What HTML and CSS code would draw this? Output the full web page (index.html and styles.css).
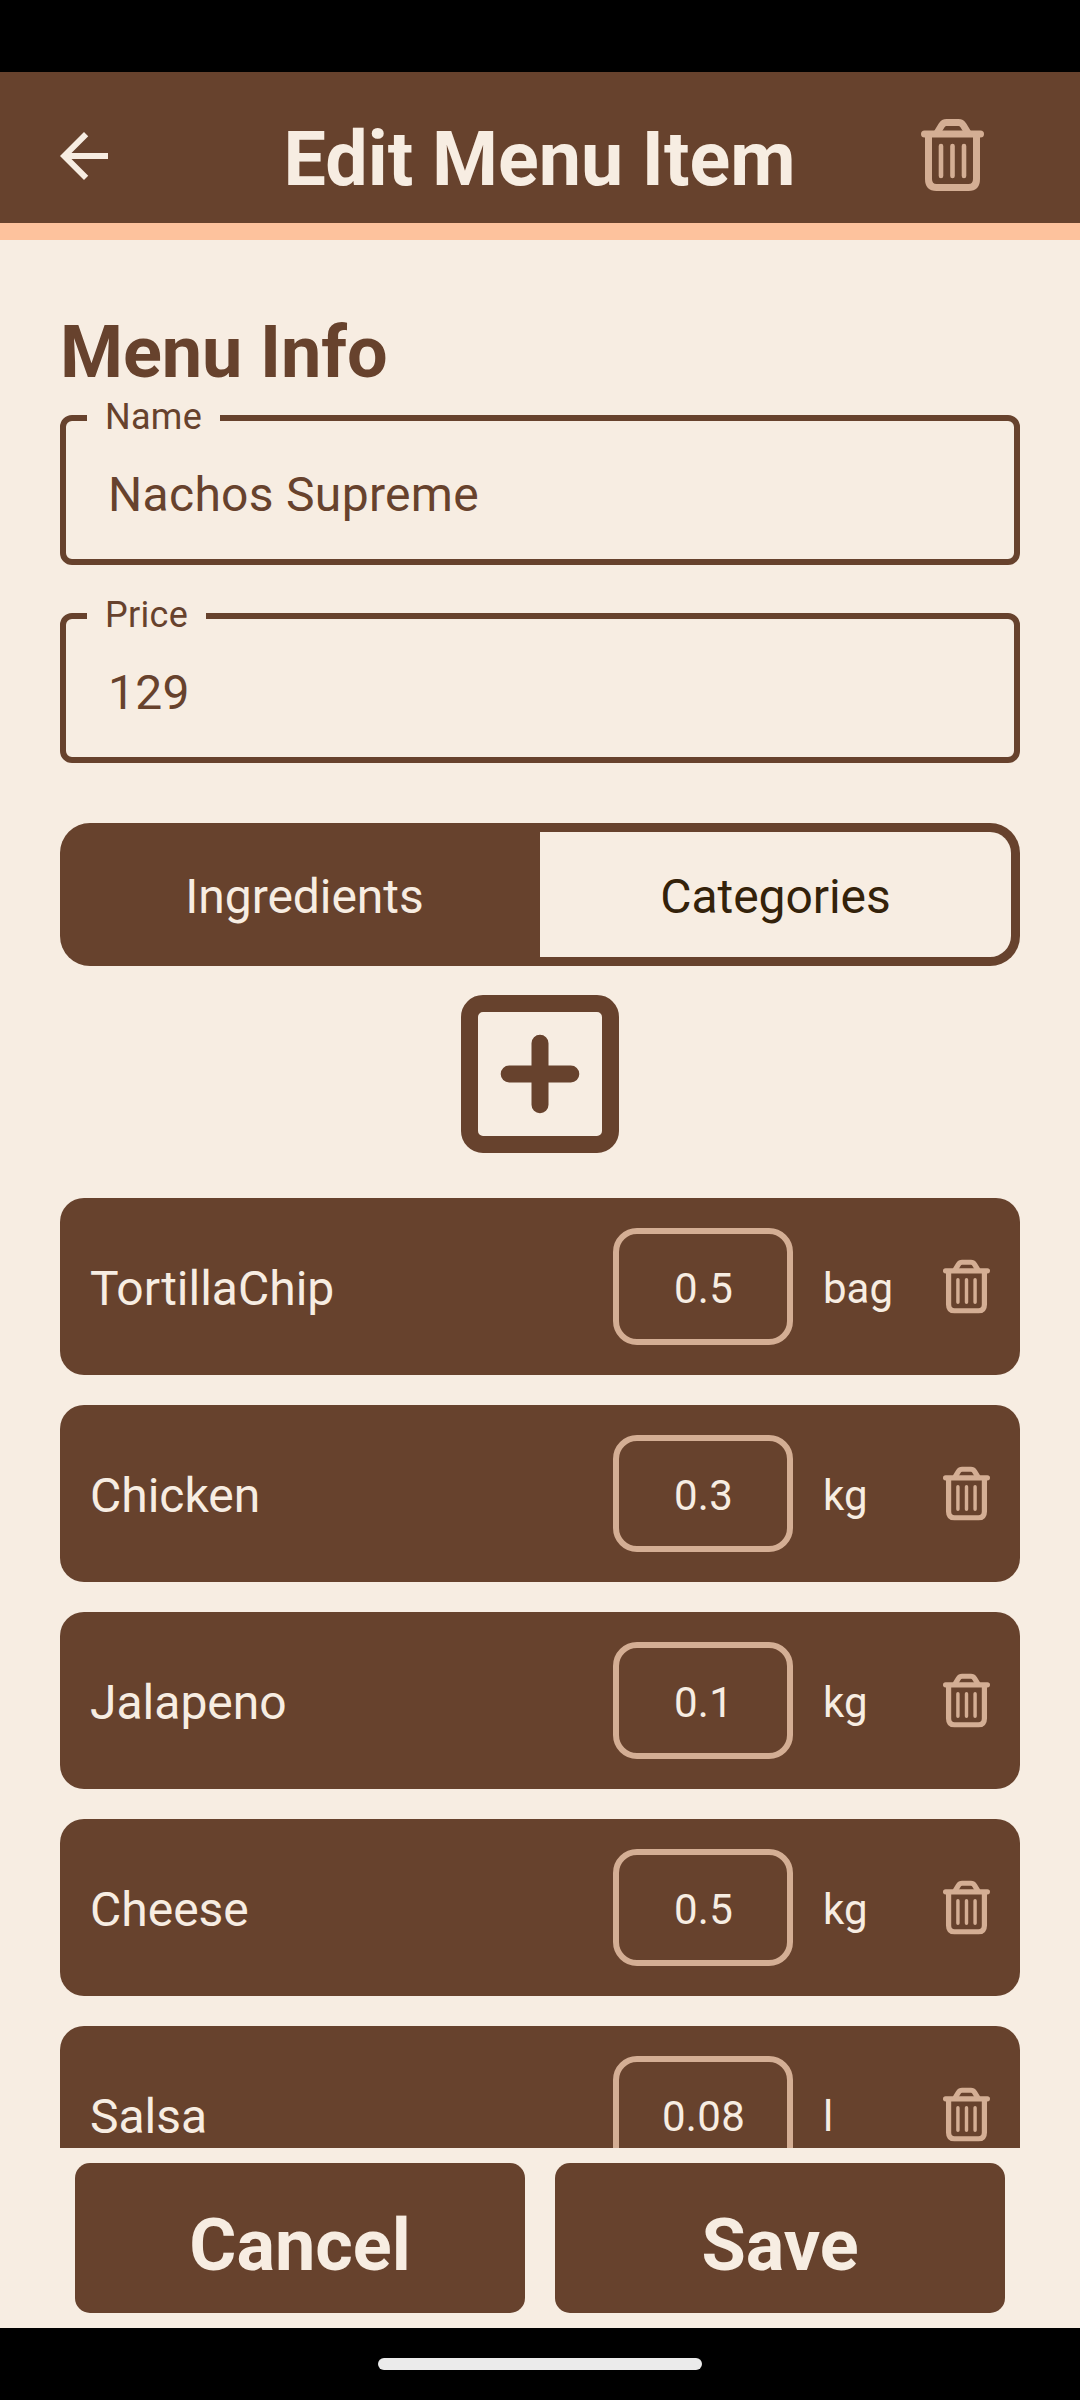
FILE: index.html
```html
<!DOCTYPE html>
<html lang="en">
<head>
<meta charset="utf-8">
<title>Edit Menu Item</title>
<link rel="stylesheet" href="styles.css">
</head>
<body>
<svg class="sprite" aria-hidden="true">
  <symbol id="trash" viewBox="0.5 0 63 72">
    <g fill="none" stroke="currentColor" stroke-linecap="round">
      <path d="M4 15H60" stroke-width="7"/>
      <path d="M16.5 14L21.2 6.3Q23 3.5 26 3.5H38Q41 3.5 42.8 6.3L47.5 14" stroke-width="7" stroke-linecap="butt"/>
      <path d="M8 16V60Q8 68.5 16 68.5H48Q56 68.5 56 60V16" stroke-width="7" stroke-linecap="butt"/>
      <path d="M20.5 27V57M32 27V57M43.5 27V57" stroke-width="4.6"/>
    </g>
  </symbol>
</svg>
<div class="screen">
  <div class="status"></div>
  <header class="bar">
    <svg class="back" viewBox="0 0 24 24"><path fill="currentColor" d="M20 11H7.83l5.59-5.59L12 4l-8 8 8 8 1.41-1.41L7.83 13H20z"/></svg>
    <h1 class="title">Edit Menu Item</h1>
    <svg class="bar-trash"><use href="#trash"/></svg>
  </header>
  <main class="content">
    <h2 class="section">Menu Info</h2>
    <fieldset class="field"><legend class="label">Name</legend><div class="value">Nachos Supreme</div></fieldset>
    <fieldset class="field"><legend class="label">Price</legend><div class="value">129</div></fieldset>
    <div class="tabs"><div class="tab active">Ingredients</div><div class="tab">Categories</div></div>
    <svg class="add" viewBox="0 0 158 158">
      <rect x="8.5" y="8.5" width="141" height="141" rx="13.5" fill="none" stroke="currentColor" stroke-width="17"/>
      <path d="M48.2 79H109.8M79 48.2V109.8" stroke="currentColor" stroke-width="17" stroke-linecap="round"/>
    </svg>
    <div class="list">
      <div class="row"><span class="name">TortillaChip</span><span class="qty">0.5</span><span class="unit">bag</span><svg class="row-trash"><use href="#trash"/></svg></div>
      <div class="row"><span class="name">Chicken</span><span class="qty">0.3</span><span class="unit">kg</span><svg class="row-trash"><use href="#trash"/></svg></div>
      <div class="row"><span class="name">Jalapeno</span><span class="qty">0.1</span><span class="unit">kg</span><svg class="row-trash"><use href="#trash"/></svg></div>
      <div class="row"><span class="name">Cheese</span><span class="qty">0.5</span><span class="unit">kg</span><svg class="row-trash"><use href="#trash"/></svg></div>
      <div class="row"><span class="name">Salsa</span><span class="qty">0.08</span><span class="unit">l</span><svg class="row-trash"><use href="#trash"/></svg></div>
    </div>
  </main>
  <footer class="actions"><div class="button">Cancel</div><div class="button">Save</div></footer>
  <div class="nav"><div class="pill"></div></div>
</div>
</body>
</html>
```
FILE: styles.css
```css
* { box-sizing: border-box; }
body {
  margin: 0;
  font-family: Roboto, sans-serif;
  background: #f7ede2;
}
.sprite { display: none; }
.screen {
  display: flex;
  flex-direction: column;
  width: 1080px;
  height: 2400px;
  overflow: hidden;
  background: #f7ede2;
  color: #67422d;
}
.status { flex: none; height: 72px; background: #000; }
.bar {
  flex: none;
  display: flex;
  align-items: center;
  height: 168px;
  padding: 0 96px 0 48px;
  border-bottom: 17px solid #fdc29d;
  background: #67422d;
  color: #f7ede2;
}
.back { flex: none; width: 72px; height: 72px; margin-top: 17px; }
.title {
  flex: 1;
  margin: 22px 0 0 38px;
  font-size: 75.4px;
  line-height: 90px;
  font-weight: 700;
  text-align: center;
}
.bar-trash { flex: none; width: 63px; height: 72px; margin-top: 15px; color: #d4ae94; }
.content {
  flex: 1;
  min-height: 0;
  overflow: hidden;
  display: flex;
  flex-direction: column;
  padding: 71px 60px 0;
}
.section {
  flex: none;
  margin: 0;
  height: 86px;
  font-size: 72px;
  line-height: 84px;
  font-weight: 700;
  letter-spacing: -0.1px;
}
.field {
  flex: none;
  margin: 0 0 30px;
  height: 168px;
  padding: 0 42px 0 21px;
  border: 6px solid #67422d;
  border-radius: 12px;
}
.label {
  height: 42px;
  padding: 0 18px;
  font-size: 36px;
  line-height: 40px;
  letter-spacing: 0.3px;
}
.value {
  padding: 20px 0 0 21px;
  font-size: 48px;
  line-height: 72px;
  letter-spacing: 0.3px;
}
.tabs {
  flex: none;
  display: flex;
  height: 143px;
  margin-top: 30px;
  padding: 9px;
  border-radius: 30px;
  background: #67422d;
  font-size: 48px;
  line-height: 130px;
  letter-spacing: -0.05px;
  text-align: center;
}
.tab {
  flex: 1;
  height: 125px;
  border-radius: 0 21px 21px 0;
  background: #f7ede2;
  color: #34220a;
}
.tab.active { background: none; color: #f7ede2; }
.add { flex: none; align-self: center; width: 158px; height: 158px; margin: 29px 0 45px; }
.list { display: flex; flex-direction: column; gap: 30px; }
.row {
  flex: none;
  display: flex;
  align-items: center;
  height: 177px;
  padding: 0 30px;
  border-radius: 24px;
  background: #67422d;
  color: #f7ede2;
}
.name { width: 523px; font-size: 48px; line-height: 72px; margin-top: 5px; }
.qty {
  width: 180px;
  height: 117px;
  padding-left: 1px;
  border: 6px solid #d4ae94;
  border-radius: 24px;
  font-size: 42px;
  line-height: 110px;
  letter-spacing: 0.3px;
  text-align: center;
}
.unit { flex: 1; padding-left: 30px; font-size: 42px; line-height: 60px; margin-top: 5px; }
.row-trash { flex: none; width: 47px; height: 55px; margin-bottom: 1px; color: #d4ae94; }
.actions { flex: none; display: flex; gap: 30px; height: 180px; padding: 15px 75px; }
.button {
  flex: 1;
  border-radius: 15px;
  background: #67422d;
  color: #f7ede2;
  font-size: 72px;
  font-weight: 700;
  line-height: 166px;
  text-align: center;
}
.nav { flex: none; display: flex; justify-content: center; height: 72px; padding-top: 30px; background: #000; }
.pill { width: 324px; height: 12px; border-radius: 6px; background: #ebebeb; }
```
